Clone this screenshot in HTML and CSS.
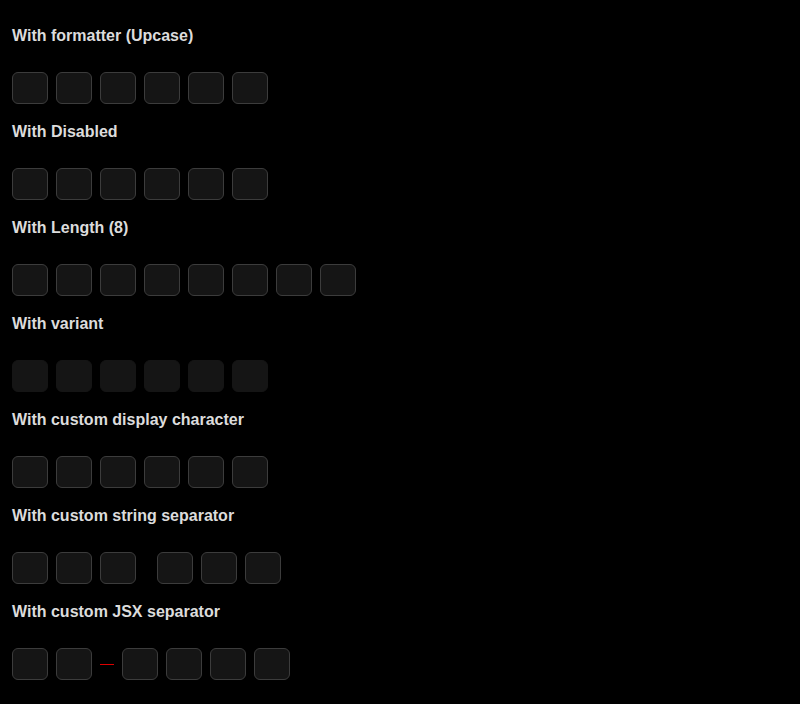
FILE: index.html
```html
<!DOCTYPE html>
<html lang="en">
<head>
  <meta charset="UTF-8" />
  <meta name="viewport" content="width=device-width, initial-scale=1.0"/>
  <title>Input OTP</title>
  <link rel="stylesheet" href="styles.css">
</head>
<body>

  <div class="container">
    <div class="section">
      <h3>With formatter (Upcase)</h3>
      <div class="otp">
        <input class="slot" maxlength="1"><input class="slot" maxlength="1"><input class="slot" maxlength="1">
        <input class="slot" maxlength="1"><input class="slot" maxlength="1"><input class="slot" maxlength="1">
      </div>
    </div>

    <div class="section">
      <h3>With Disabled</h3>
      <div class="otp">
        <input class="slot" disabled><input class="slot" disabled><input class="slot" disabled>
        <input class="slot" disabled><input class="slot" disabled><input class="slot" disabled>
      </div>
    </div>

    <div class="section">
      <h3>With Length (8)</h3>
      <div class="otp">
        <input class="slot"><input class="slot"><input class="slot"><input class="slot">
        <input class="slot"><input class="slot"><input class="slot"><input class="slot">
      </div>
    </div>

    <div class="section">
      <h3>With variant</h3>
      <div class="otp">
        <input class="slot filled"><input class="slot filled"><input class="slot filled">
        <input class="slot filled"><input class="slot filled"><input class="slot filled">
      </div>
    </div>

    <div class="section">
      <h3>With custom display character</h3>
      <div class="otp">
        <input class="slot" type="password"><input class="slot" type="password"><input class="slot" type="password">
        <input class="slot" type="password"><input class="slot" type="password"><input class="slot" type="password">
      </div>
    </div>

    <div class="section">
      <h3>With custom string separator</h3>
      <div class="otp">
        <input class="slot"><input class="slot"><input class="slot">
        <span class="sep-text">&nbsp;</span>
        <input class="slot"><input class="slot"><input class="slot">
      </div>
    </div>

    <div class="section">
      <h3>With custom JSX separator</h3>
      <div class="otp">
        <input class="slot"><input class="slot">
        <span class="sep-line"></span>
        <input class="slot"><input class="slot"><input class="slot"><input class="slot">
      </div>
    </div>
  </div>

</body>
</html>
```

FILE: styles.css
```css
body {
  margin: 0;
  padding: 0;
  background: #000;
  color: #dcdcdc;
  font-family: "Liberation Sans", Arial, sans-serif;
}

.container {
  display: flex;
  flex-direction: column;
  gap: 16px;
  padding: 24px 12px;
}

h3 {
  margin: 0;
  font-size: 16px;
  line-height: 24px;
  font-weight: bold;
}

.otp {
  display: flex;
  align-items: center;
  gap: 8px;
  margin-top: 24px;
}

.slot {
  width: 36px;
  height: 32px;
  padding: 0;
  margin: 0;
  box-sizing: border-box;
  background: #151515;
  border: 1px solid #3c3c3c;
  border-radius: 6px;
  color: #eee;
  text-align: center;
  font-size: 16px;
}

.slot.filled {
  border-color: #151515;
}

.sep-text {
  font-size: 16px;
  line-height: 32px;
  width: 5px;
}

.sep-line {
  width: 14px;
  height: 1px;
  background: #d00;
}
```
